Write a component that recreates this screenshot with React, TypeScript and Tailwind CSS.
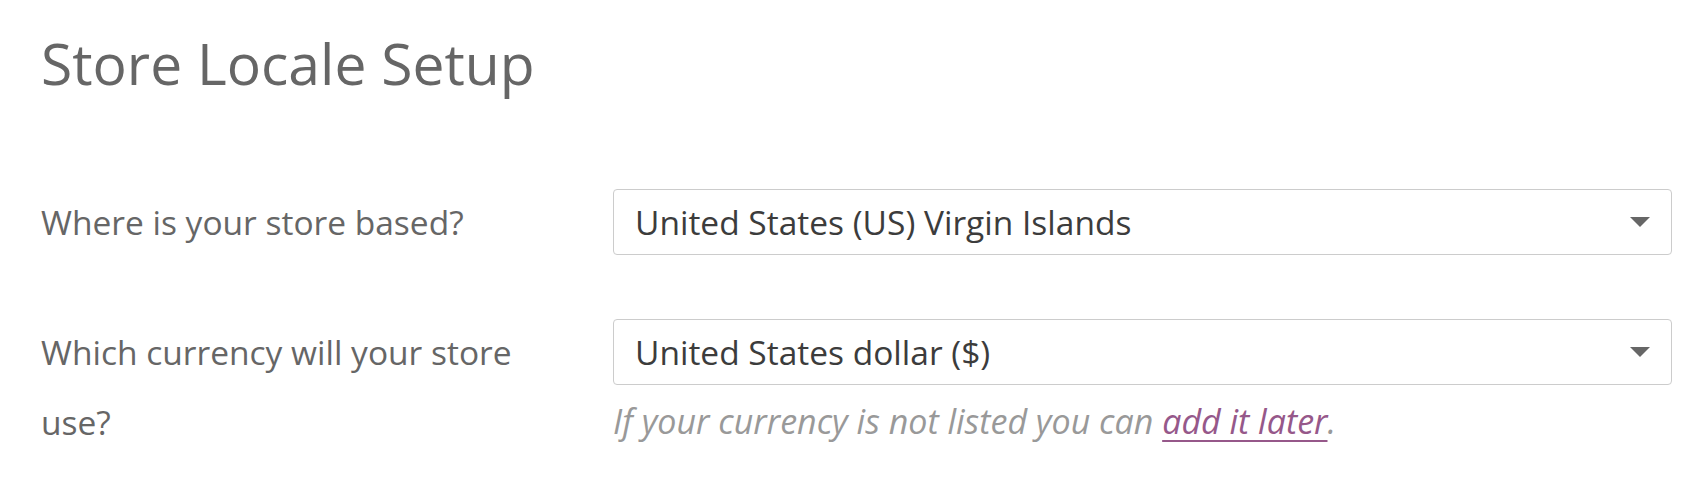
import type { ReactNode } from "react";

function Caret() {
  return (
    <svg width="20" height="10" viewBox="0 0 20 10" className="shrink-0">
      <path d="M0 0 L20 0 L10 10 Z" fill="#666666" />
    </svg>
  );
}

function FakeSelect({ value }: { value: string }) {
  return (
    <div className="flex h-[66px] items-center justify-between rounded-[4px] border border-[#cccccc] bg-white pl-[21px] pr-[21px] text-[#3c3c3c]">
      <span>{value}</span>
      <Caret />
    </div>
  );
}

function Row({ label, children }: { label: string; children: ReactNode }) {
  return (
    <div className="grid grid-cols-[540px_1fr] gap-x-[32px]">
      <label className="-mt-[2px] text-[#666666] leading-[70px]">{label}</label>
      <div>{children}</div>
    </div>
  );
}

export default function App() {
  return (
    <div
      className="min-h-screen bg-white pl-[41px] pr-[25px] pt-[18px] text-[33.5px]"
      style={{ fontFamily: '"Open Sans", "Noto Sans", sans-serif' }}
    >
      {/* Heading */}
      <h1 className="text-[57px] font-normal leading-[90px] text-[#666666]">Store Locale Setup</h1>

      <div className="mt-[81px] flex flex-col gap-[62px]">
        <Row label="Where is your store based?">
          <FakeSelect value="United States (US) Virgin Islands" />
        </Row>

        <Row label="Which currency will your store use?">
          <FakeSelect value="United States dollar ($)" />
          <p className="mt-[11px] text-[34px] italic text-[#999999]">
            If your currency is not listed you can{" "}
            <a href="#" className="text-[#96588a] underline decoration-[2px] underline-offset-[6px]">
              add it later
            </a>
            .
          </p>
        </Row>
      </div>
    </div>
  );
}
